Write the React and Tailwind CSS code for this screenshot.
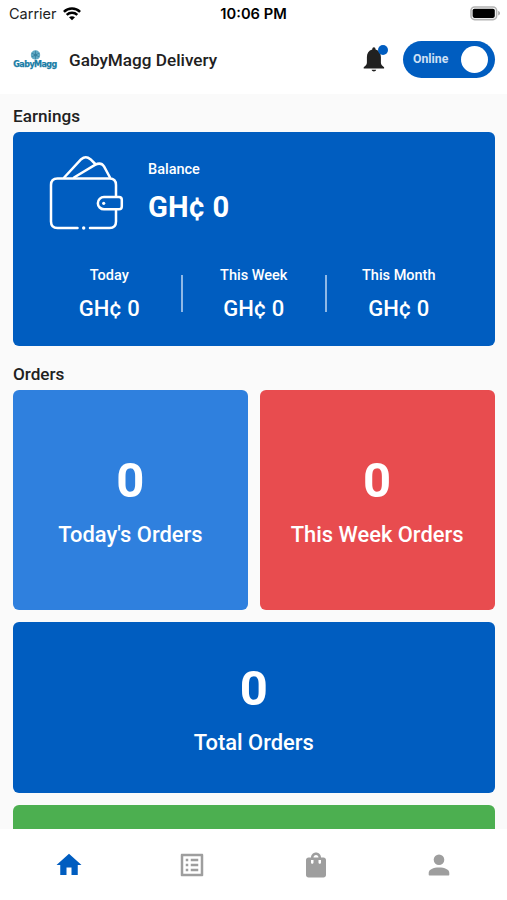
import React, { useState } from 'react';
import { MdHome, MdOutlineListAlt, MdShoppingBag } from 'react-icons/md';

const earnings = [
  { label: 'Today', value: 'GH¢ 0' },
  { label: 'This Week', value: 'GH¢ 0' },
  { label: 'This Month', value: 'GH¢ 0' },
];

const WifiIcon = () => (
  <svg width="18" height="14" viewBox="0 0 18 14" fill="none" stroke="#000" strokeWidth="2.5">
    <path d="M0.9 4.9C5.4 0.5 12.6 0.5 17.1 4.9" />
    <path d="M3.7 7.9C6.7 5.1 11.3 5.1 14.3 7.9" />
    <path d="M9 13.3L6 10.3C7.7 8.8 10.3 8.8 12 10.3Z" fill="#000" stroke="none" />
  </svg>
);

const BatteryIcon = () => (
  <svg width="31" height="15" viewBox="0 0 31 15">
    <rect x="1" y="1" width="25.6" height="12.6" rx="3.6" fill="#fff" stroke="#b3b3b3" strokeWidth="1.6" />
    <rect x="2.6" y="2.7" width="22.2" height="9.2" rx="1.8" fill="#000" />
    <path d="M28.2 5.1C30.6 5.8 30.6 8.8 28.2 9.5Z" fill="#a8a8a8" />
  </svg>
);

const BellIcon = () => (
  <svg width="22" height="25" viewBox="0 0 22 25" fill="#212121">
    <path d="M10.9 0.2C11.9 0.2 12.4 0.9 12.6 2.4C16.1 3.5 17.9 6.2 17.9 9.9V15.6C17.9 17.5 18.8 18.6 21.1 20.2V21.5H0.7V20.2C3 18.6 3.9 17.5 3.9 15.6V9.9C3.9 6.2 5.7 3.5 9.2 2.4C9.4 0.9 9.9 0.2 10.9 0.2Z" />
    <path d="M8.6 22.7H13.2C12.7 25 9.1 25 8.6 22.7Z" />
  </svg>
);

const PersonIcon = ({ className }) => (
  <svg viewBox="0 0 30 30" fill="currentColor" className={className}>
    <circle cx="15" cy="9.7" r="5.3" />
    <path d="M4.7 24.8V22.8C4.7 19.3 9.3 17.4 15 17.4S25.3 19.3 25.3 22.8V24.8C25.3 25.2 25 25.4 24.6 25.4H5.4C5 25.4 4.7 25.2 4.7 24.8Z" />
  </svg>
);

const Logo = () => (
  <div className="flex w-[42px] flex-col items-center">
    <svg width="11" height="10" viewBox="0 0 11 10">
      <circle cx="5.5" cy="5" r="4.7" fill="#5fa9c4" />
      <path d="M5.5 0.8V9.2M1.5 3L9.5 7M1.5 7L9.5 3" stroke="#37819f" strokeWidth="0.8" />
      <circle cx="5.5" cy="5" r="1.6" fill="#37819f" />
    </svg>
    <span className="font-['DejaVu_Sans',sans-serif] text-[8px] leading-[9px] font-bold tracking-[-0.55px] text-[#187da6] [-webkit-text-stroke:0.25px_#187da6]">
      GabyMagg
    </span>
  </div>
);

const WalletIcon = () => (
  <svg
    width="75"
    height="75"
    viewBox="0 0 75 75"
    fill="none"
    stroke="#fff"
    strokeWidth="2.5"
    strokeLinecap="round"
    strokeLinejoin="round"
  >
    {/* notes */}
    <path d="M15.2 22.5L32.2 4.2Q36.8 0.2 41.4 4.2L46.3 9" />
    <path d="M25 22.5L46 9.9Q52 6.8 55 11.4L61 22.5" />
    {/* body */}
    <path d="M28.5 73H8.5Q2 73 2 66.5V30Q2 23.5 8.5 23.5H60.5Q67 23.5 67 30V41" />
    <path d="M41 73H60.5Q67 73 67 66.5V55.5" />
    {/* clasp */}
    <path d="M55 42H70Q72.8 42 72.8 44.8V51.5Q72.8 54.3 70 54.3H55A6.15 6.15 0 0 1 55 42Z" />
    <circle cx="54.7" cy="48.3" r="1.6" fill="#fff" stroke="none" />
    <circle cx="34.7" cy="73" r="1.7" fill="#fff" stroke="none" />
  </svg>
);

const tabs = [
  { id: 'home', Icon: MdHome },
  { id: 'orders', Icon: MdOutlineListAlt },
  { id: 'shop', Icon: MdShoppingBag },
  { id: 'profile', Icon: PersonIcon },
];

const OrderCard = ({ count, label, className }) => (
  <div className={`flex flex-col items-center justify-center rounded-md text-white ${className}`}>
    <span className="text-[49px] leading-[58px] font-bold">{count}</span>
    <span className="mt-3 text-[21.9px] leading-[26px] font-medium">{label}</span>
  </div>
);

const App = () => {
  const [online, setOnline] = useState(true);
  const [activeTab, setActiveTab] = useState('home');

  return (
    <div className="flex h-[900px] w-[507px] flex-col overflow-hidden bg-[#fafafa] font-[Roboto,sans-serif] text-[#212121]">
      <div className="grid h-7 shrink-0 grid-cols-3 items-center bg-white pr-[6px] pl-[9px] font-[Inter,sans-serif] text-black">
        <div className="flex items-center gap-[6px] text-[14.5px] text-[#222]">
          <span>Carrier</span>
          <WifiIcon />
        </div>
        <span className="-ml-[3px] text-center text-[14.7px] font-semibold">10:06 PM</span>
        <div className="flex justify-end pb-px">
          <BatteryIcon />
        </div>
      </div>

      <header className="flex h-[66px] shrink-0 items-center bg-white pr-3 pb-[3px] pl-[14px]">
        <Logo />
        <h1 className="ml-[13px] pt-[2px] text-[17.15px] font-medium">GabyMagg Delivery</h1>
        <button className="relative ml-auto">
          <BellIcon />
          <span className="absolute -top-[2px] -right-[3px] size-[10px] rounded-full bg-[#005dc0]" />
        </button>
        <button
          onClick={() => setOnline(!online)}
          className="ml-[18px] flex h-[37px] w-[92px] items-center justify-between rounded-full bg-[#005dc0] pr-[7px] pl-[10px]"
        >
          <span className="text-[12.25px] font-bold text-[#cfe0f5]">{online ? 'Online' : 'Offline'}</span>
          <span className="size-[27px] rounded-full bg-white" />
        </button>
      </header>

      <main className="flex min-h-0 flex-1 flex-col overflow-hidden pt-[11.5px] pr-[12.5px] pl-[13px]">
        <h2 className="text-[17.15px] leading-5 font-medium">Earnings</h2>
        <section className="mt-[6px] h-[214px] shrink-0 rounded-md bg-[#005dc0] px-6 pt-[23px] text-white">
          <div className="flex pl-3">
            <WalletIcon />
            <div className="ml-6 pt-[6.5px]">
              <p className="text-[14.5px] leading-[17px] font-medium">Balance</p>
              <p className="mt-[12px] text-[29.2px] leading-[35px] font-bold">GH¢ 0</p>
            </div>
          </div>
          <div className="mt-9 grid grid-cols-3">
            {earnings.map(({ label, value }, i) => (
              <div key={label} className="flex items-center">
                <div className="flex-1 pt-px pl-px text-center">
                  <p className="text-[14.5px] leading-[17px] font-medium">{label}</p>
                  <p className="mt-[12px] text-[22px] leading-[26px] font-medium">{value}</p>
                </div>
                {i < earnings.length - 1 && <div className="-mr-px h-[37px] w-[2px] bg-[#8fb8e6]" />}
              </div>
            ))}
          </div>
        </section>

        <h2 className="mt-[18px] text-[17.15px] leading-5 font-medium">Orders</h2>
        <section className="mt-[6px] grid shrink-0 grid-cols-2 gap-3">
          <OrderCard count={0} label="Today's Orders" className="h-[220px] bg-[#2f80de]" />
          <OrderCard count={0} label="This Week Orders" className="h-[220px] bg-[#e84c4f]" />
          <OrderCard count={0} label="Total Orders" className="col-span-2 h-[171px] bg-[#005dc0] pt-px" />
          <div className="col-span-2 h-[171px] rounded-md bg-[#4caf50]" />
        </section>
      </main>

      <nav className="grid h-[71px] shrink-0 grid-cols-4 bg-white pr-[6px] pl-[7px]">
        {tabs.map(({ id, Icon }) => (
          <button
            key={id}
            onClick={() => setActiveTab(id)}
            className={`flex items-center justify-center ${activeTab === id ? 'text-[#005dc0]' : 'text-[#9e9e9e]'}`}
          >
            <Icon className="size-[30px]" />
          </button>
        ))}
      </nav>
    </div>
  );
};

export default App;
